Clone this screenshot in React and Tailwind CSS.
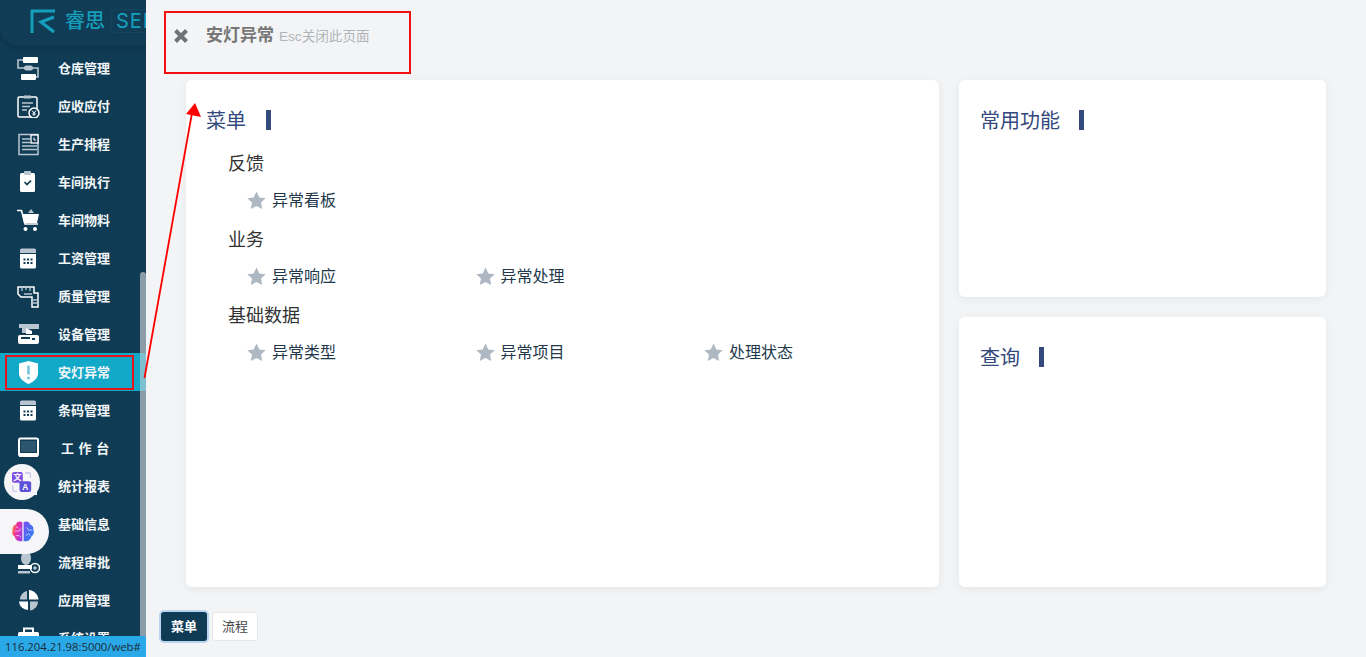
const W = "#ffffff";
const G = "#b9c6cf";
const D = "#0f3b54";
const icons = {
  warehouse: <g><rect x="6" y="0" width="15" height="6" rx="1" fill={W}/><rect x="4" y="17" width="15" height="6" rx="1" fill={W}/><rect x="7" y="8.500" width="9" height="5" rx="2.500" fill={G}/><path d="M6 3H1v8h20v9h-2" fill="none" stroke={G} strokeWidth="1.600"/></g>,
  pay: <g><rect x="1" y="2" width="19" height="20" rx="1.500" fill="none" stroke={W} strokeWidth="1.500"/><rect x="7" y="0.500" width="7" height="3" fill={G}/><path d="M5 8h11M5 11.500h8M5 15h5" stroke={G} strokeWidth="1.500"/><circle cx="17" cy="18" r="5" fill={D} stroke={W} strokeWidth="1.500"/><path d="M15 15.500l2 2.500 2-2.500M17 18v3M15.200 19h3.600" stroke={W} strokeWidth="1" fill="none"/></g>,
  plan: <g><path d="M2 1.500h19v20H2z" fill="none" stroke={G} strokeWidth="1.500"/><path d="M5 6h8M5 9.500h8M5 13h15M5 16.500h15" stroke={G} strokeWidth="1.600"/><rect x="14" y="2" width="7" height="8" fill={D} stroke={W} strokeWidth="1.300"/><path d="M17 4.500v2.500h2" stroke={W} fill="none"/></g>,
  exec: <g><rect x="3" y="2" width="15" height="19" rx="1.500" fill={W}/><rect x="7" y="0" width="7" height="4" rx="1" fill={G}/><path d="M7.500 11l2.500 2.500 4-4" fill="none" stroke={D} strokeWidth="1.700"/></g>,
  cart: <g><path d="M5 5h17l-2 9H7z" fill={W}/><path d="M0 1.500h4.500L8 15h13" fill="none" stroke={W} strokeWidth="1.600"/><circle cx="8.500" cy="20" r="2" fill={W}/><circle cx="18" cy="20" r="2" fill={W}/><path d="M11 4l3-4 3 4z" fill={G}/></g>,
  cal: <g><path d="M3 3a1.500 1.500 0 0 1 1.500-1.500h13A1.500 1.500 0 0 1 19 3v3H3z" fill={G}/><path d="M3 7h16v13a1.500 1.500 0 0 1-1.500 1.500h-13A1.500 1.500 0 0 1 3 20z" fill={W}/><path d="M6.500 12.500h2M10 12.500h2M13.500 12.500h2M6.500 16h2M10 16h2M13.500 16h2" stroke={D} strokeWidth="1.800"/></g>,
  quality: <g><path d="M1 2h16v6h4v14h-6V12H4L1 9z" fill="none" stroke={W} strokeWidth="1.500"/><path d="M5 2v4M9 2v3M13 2v4M7 9h8M15 15h7M15 18h7" stroke={G} strokeWidth="1.300"/></g>,
  device: <g><path d="M2 1h20v5H9v4H5V5H2z" fill={G}/><path d="M9 5l6 3v3H9z" fill={W}/><rect x="1" y="12" width="21" height="9" rx="2" fill={W}/><rect x="4" y="14" width="9" height="2" fill={D}/><path d="M15 16h3" stroke={D} strokeWidth="2"/></g>,
  shield: <g><path d="M11.500 0l9.500 2.500v10c0 5-5 8.500-9.500 10.500C7 21 2 17.500 2 12.500v-10z" fill={W}/><path d="M11.500 4.500v9" stroke="#6fc3d6" strokeWidth="2.400"/><circle cx="11.500" cy="17" r="1.500" fill="#6fc3d6"/></g>,
  desk: <g><rect x="2" y="1.500" width="19" height="17" rx="1.500" fill="none" stroke={W} strokeWidth="2"/><rect x="4" y="4" width="15" height="11" fill="#2c566d"/><rect x="2" y="16" width="19" height="4" fill={W}/></g>,
  report: <g><rect x="3" y="2" width="17" height="18" fill={W}/></g>,
  base: <g><rect x="3" y="2" width="17" height="18" fill={G}/></g>,
  flow: <g><ellipse cx="9" cy="7" rx="5" ry="7" fill={G}/><rect x="1" y="14" width="14" height="4" fill={W}/><rect x="1" y="20" width="12" height="2.500" fill={G}/><circle cx="18" cy="17" r="4.500" fill="none" stroke={W} strokeWidth="1.500"/><circle cx="18" cy="17" r="1.800" fill={G}/></g>,
  app: <g><path d="M3 10.500a8.500 8.500 0 0 1 7-8.500v8.500z" fill={G}/><path d="M12 1c5 .5 9 4 9.500 9.500H12z" fill={W}/><path d="M2 12.500h9V21a9 9 0 0 1-9-8.500z" fill={W}/><path d="M13 12.500h8a9 9 0 0 1-8 9z" fill={G}/></g>,
  sys: <g><rect x="1" y="5" width="21" height="16" rx="1.500" fill={W}/><path d="M7 5V1.500h9V5" fill="none" stroke={W} strokeWidth="2"/></g>,
};

const menu = [
  ["warehouse", "仓库管理"], ["pay", "应收应付"], ["plan", "生产排程"], ["exec", "车间执行"], ["cart", "车间物料"],
  ["cal", "工资管理"], ["quality", "质量管理"], ["device", "设备管理"], ["shield", "安灯异常"], ["cal", "条码管理"],
  ["desk", "工 作 台"], ["report", "统计报表"], ["base", "基础信息"], ["flow", "流程审批"], ["app", "应用管理"], ["sys", "系统设置"],
];

function Star() {
  return (
    <svg width="19" height="18" viewBox="0 0 19 18" className="shrink-0 mt-[-2px]">
      <path d="M9.500 0.500l2.800 5.900 6.400.8-4.700 4.400 1.200 6.400-5.700-3.100-5.700 3.100 1.200-6.400L.3 7.200l6.400-.8z" fill="#aeb8c2" />
    </svg>
  );
}

function Item({ label }) {
  return (
    <div className="w-[228.500px] flex items-center gap-[6px] text-[16px] text-[#22384a] h-[38px] pb-[2px]">
      <Star />
      <span>{label}</span>
    </div>
  );
}

function Group({ title, items }) {
  return (
    <div className="pl-[42px]">
      <div className="h-[38px] flex items-center text-[18px] text-[#333] leading-none">{title}</div>
      <div className="flex pl-[19px]">
        {items.map((i) => <Item key={i} label={i} />)}
      </div>
    </div>
  );
}

function CardTitle({ label, narrow }) {
  return (
    <div className="flex items-center h-[20px] text-[20px] leading-none text-[#34497c]">
      <span className="mt-[1px]">{label}</span>
      <span className={`w-[5px] h-[20px] bg-[#34497c] ${narrow ? "ml-[19px]" : "ml-[20px]"}`} />
    </div>
  );
}

function Translate() {
  return (
    <svg width="20" height="22" viewBox="0 0 24 26">
      <rect x="0" y="1" width="13" height="13" rx="2.500" fill="#7c4fe0" />
      <rect x="9" y="12" width="14" height="13" rx="2.500" fill="#5b50d6" />
      <text x="6.500" y="11" fontSize="10" fontWeight="700" fill="#fff" textAnchor="middle" fontFamily="'Noto Sans CJK SC', sans-serif">文</text>
      <text x="16" y="22.500" fontSize="10" fontWeight="700" fill="#fff" textAnchor="middle" fontFamily="'Liberation Sans', sans-serif">A</text>
      <path d="M16 2h5a1 1 0 0 1 1 1v5M1 17v6a1 1 0 0 0 1 1h4" fill="none" stroke="#c9b8f2" strokeWidth="1.300" />
    </svg>
  );
}

function Brain() {
  return (
    <svg width="24" height="23" viewBox="0 0 26 25">
      <defs>
        <linearGradient id="bl" x1="0" y1="0.300" x2="1" y2="0.700">
          <stop offset="0" stopColor="#f9843a" /><stop offset="0.400" stopColor="#ef2fa0" /><stop offset="1" stopColor="#9a3fe8" />
        </linearGradient>
        <linearGradient id="br" x1="0" y1="0" x2="1" y2="1">
          <stop offset="0" stopColor="#7a4cf0" /><stop offset="1" stopColor="#1f8cf5" />
        </linearGradient>
      </defs>
      <path d="M12.300 2.500C9 .5 6 2 5.500 4.500 2.500 5.500 1 8.500 1.800 11 .5 13.500 1.500 17 4 18c.5 3 3 6 8.300 5z" fill="url(#bl)" />
      <path d="M13.700 2.500C17 .5 20 2 20.500 4.500c3 1 4.500 4 3.700 6.500 1.300 2.500.3 6-2.200 7-.5 3-3 6-8.300 5z" fill="url(#br)" />
      <path d="M4 12h5l2-3M5 7l3 2M17 8l2 3h4M16 17l3-2 2 2M5 17h4l2 2" fill="none" stroke="#fff" strokeWidth="0.800" opacity="0.800" />
    </svg>
  );
}

export default function App() {
  return (
    <div className="relative w-[1366px] h-[657px] overflow-hidden flex bg-[#f3f4f6] font-['Liberation_Sans','Noto_Sans_CJK_SC',sans-serif]">
      <aside className="relative w-[146px] h-full shrink-0 bg-[#0f3b54] overflow-hidden">
        <div className="h-[46px] mb-[3px] flex items-center pl-[30px] rounded-bl-[18px] bg-[#103c56] shadow-[0_2px_5px_rgba(0,0,0,0.18)] overflow-hidden">
          <div className="flex items-center mt-[-4px] text-[#159fbb] shrink-0">
            <svg width="25" height="24" viewBox="0 0 25 24" className="shrink-0">
              <path d="M2 24V2h23" fill="none" stroke="#159fbb" strokeWidth="3" />
              <path d="M24 8L11 13l13 10" fill="none" stroke="#159fbb" strokeWidth="3.200" />
            </svg>
            <span className="ml-[10px] text-[20px] font-medium leading-none whitespace-nowrap">睿思</span>
            <span className="ml-[6px] pl-[4px] pr-[4px] py-[1px] rounded-[4px] border border-[#14445e] text-[20px] leading-none whitespace-nowrap tracking-[1px] font-['Inter',sans-serif]">SEP</span>
          </div>
        </div>
        <nav>
          {menu.map(([icon, label]) => {
            const active = label === "安灯异常";
            const desk = label === "工 作 台";
            return (
              <div key={label} className={`h-[38px] flex items-center ${active ? "bg-[#12a8c8]" : ""}`}>
                <div className="w-[58px] pl-[17px] shrink-0">
                  <svg width="23" height="23" viewBox="0 0 23 23" className="block">{icons[icon]}</svg>
                </div>
                <span className={`text-[13px] font-bold text-[#f2f6f8] whitespace-pre leading-none ${desk ? "ml-[3px] [word-spacing:1px]" : ""}`}>{label}</span>
              </div>
            );
          })}
        </nav>
        <div className="absolute right-0 top-[272px] bottom-0 w-[6px] rounded-t-[3px] bg-[#8a9ca8]" />
        <div className="absolute right-0 top-[353px] h-[38px] w-[6px] bg-[#7fc0d0]" />
      </aside>

      <main className="flex-1 min-w-0 flex flex-col">
        <header className="h-[80px] flex items-start pl-[27px] pt-[25px]">
          <svg width="16" height="16" viewBox="0 0 16 16" className="mt-[3px] shrink-0">
            <path d="M2.500 2.500l11 11M13.500 2.500l-11 11" stroke="#6e7378" strokeWidth="4" />
          </svg>
          <span className="ml-[17px] text-[17px] font-bold text-[#777] leading-[22px]">安灯异常</span>
          <span className="ml-[5px] text-[13.600px] text-[#b0b4b8] leading-[23px]">Esc关闭此页面</span>
        </header>

        <div className="h-[507px] flex gap-[20px] pl-[40px] pr-[40px]">
          <section className="w-[753px] bg-white rounded-[6px] shadow-[0_2px_10px_rgba(0,0,0,0.06)] pt-[30px]">
            <div className="pl-[20px] mb-[15px]"><CardTitle label="菜单" /></div>
            <Group title="反馈" items={["异常看板"]} />
            <Group title="业务" items={["异常响应", "异常处理"]} />
            <Group title="基础数据" items={["异常类型", "异常项目", "处理状态"]} />
          </section>
          <div className="flex-1 flex flex-col gap-[20px]">
            <section className="h-[217px] bg-white rounded-[6px] shadow-[0_2px_10px_rgba(0,0,0,0.06)] pt-[30px] pl-[21px]">
              <CardTitle label="常用功能" narrow />
            </section>
            <section className="flex-1 bg-white rounded-[6px] shadow-[0_2px_10px_rgba(0,0,0,0.06)] pt-[30px] pl-[21px]">
              <CardTitle label="查询" narrow />
            </section>
          </div>
        </div>

        <footer className="flex items-start gap-[5px] pl-[15px] pt-[25px]">
          <div className="w-[46px] h-[29px] flex items-center justify-center rounded-[3px] bg-[#0f3b54] text-white text-[13px] font-bold shadow-[0_0_0_2px_#b9d5f0]">菜单</div>
          <div className="w-[46px] h-[29px] flex items-center justify-center rounded-[3px] bg-white border border-[#e5e7eb] text-[#444] text-[13px]">流程</div>
        </footer>
      </main>

      <div className="absolute left-[4px] top-[464px] w-[36px] h-[36px] rounded-full bg-[#f6f6f8] flex items-center justify-center">
        <Translate />
      </div>
      <div className="absolute left-0 top-[509px] w-[49px] h-[45px] rounded-r-[23px] bg-[#f6f6f8] flex items-center justify-center pr-[3px]">
        <Brain />
      </div>

      <div className="absolute left-0 bottom-0 w-[146px] h-[21px] bg-[#2aa9e8] rounded-tr-[2px] pl-[5px] text-[11.300px] leading-[21px] text-[#1d2b36] whitespace-nowrap font-['Open_Sans',sans-serif]">116.204.21.98:5000/web#</div>

      <div className="absolute left-[5px] top-[355px] w-[129px] h-[35px] border-2 border-[#e8141c]" />
      <div className="absolute left-[164px] top-[11px] w-[247px] h-[63px] border-2 border-[#f01010]" />
      <svg className="absolute left-0 top-0 pointer-events-none" width="1366" height="657">
        <path d="M144.500 378L192 113" stroke="#f00" strokeWidth="1.800" />
        <path d="M195 103L186 114L201 117z" fill="#f00" />
      </svg>
    </div>
  );
}
